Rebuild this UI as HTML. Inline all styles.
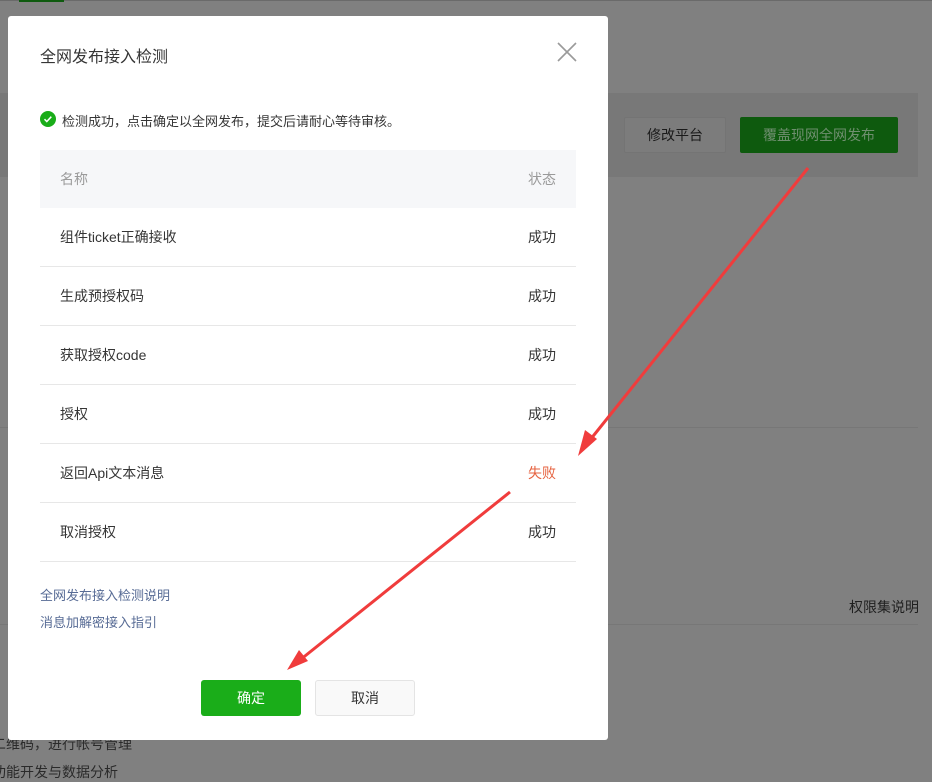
<!DOCTYPE html>
<html><head><meta charset="utf-8"><style>
*{margin:0;padding:0;box-sizing:border-box}
body{width:932px;height:773px;overflow:hidden;background:#808080;position:relative;font-family:"Liberation Sans","Noto Sans CJK SC",sans-serif;font-size:14px;color:#353535}
.a{position:absolute}
.row{position:absolute;left:40px;width:536px;height:59px;border-bottom:1px solid #e7e7e7;line-height:58px;padding:0 20px}
.row span{float:right}
</style></head><body>
<div class="a" style="left:0;top:0;width:932px;height:1px;background:#6a6a6a"></div>
<div class="a" style="left:19px;top:0;width:45px;height:2px;background:#0e5a0e"></div>
<div class="a" style="left:0;top:93px;width:918px;height:84px;background:#787878"></div>
<div class="a" style="left:624px;top:117px;width:102px;height:36px;background:#7c7c7c;border:1px solid #747474;border-radius:2px;line-height:34px;text-align:center;color:#1a1a1a">修改平台</div>
<div class="a" style="left:740px;top:117px;width:158px;height:36px;background:#0e5a0e;border-radius:2px;line-height:36px;text-align:center;color:#6f8f6f">覆盖现网全网发布</div>
<div class="a" style="left:0;top:427px;width:918px;height:1px;background:#777"></div>
<div class="a" style="left:0;top:624px;width:918px;height:1px;background:#777"></div>
<div class="a" style="left:849px;top:597px;color:#1f1f1f">权限集说明</div>
<div class="a" style="left:-8px;top:734px;color:#2a2a2a">二维码，进行帐号管理</div>
<div class="a" style="left:-8px;top:762px;color:#2a2a2a">功能开发与数据分析</div>
<div class="a" style="left:8px;top:16px;width:600px;height:724px;background:#fff;border-radius:3px"></div>
<div class="a" style="left:40px;top:43px;font-size:16px;color:#353535">全网发布接入检测</div>
<svg class="a" style="left:557px;top:42px" width="20" height="20"><path d="M1 1L19 19M19 1L1 19" stroke="#9a9a9a" stroke-width="1.6"/></svg>
<svg class="a" style="left:40px;top:111px" width="16" height="16"><circle cx="8" cy="8" r="8" fill="#1aad19"/><path d="M4.5 8.2l2.3 2.3 4.5-4.8" stroke="#fff" stroke-width="1.5" fill="none"/></svg>
<div class="a" style="left:62px;top:111px;font-size:13px;color:#353535">检测成功，点击确定以全网发布，提交后请耐心等待审核。</div>
<div class="a" style="left:40px;top:150px;width:536px;height:58px;background:#f6f7f9;line-height:58px;padding:0 20px;color:#9a9a9a">名称<span style="float:right">状态</span></div>
<div class="row" style="top:208px">组件ticket正确接收<span>成功</span></div>
<div class="row" style="top:267px">生成预授权码<span>成功</span></div>
<div class="row" style="top:326px">获取授权code<span>成功</span></div>
<div class="row" style="top:385px">授权<span>成功</span></div>
<div class="row" style="top:444px">返回Api文本消息<span style="color:#e6623f">失败</span></div>
<div class="row" style="top:503px">取消授权<span>成功</span></div>
<div class="a" style="left:40px;top:585px;font-size:13px;color:#576b95">全网发布接入检测说明</div>
<div class="a" style="left:40px;top:612px;font-size:13px;color:#576b95">消息加解密接入指引</div>
<div class="a" style="left:201px;top:680px;width:100px;height:36px;background:#1aad19;border-radius:3px;color:#fff;line-height:36px;text-align:center">确定</div>
<div class="a" style="left:315px;top:680px;width:100px;height:36px;background:#f9f9f9;border:1px solid #e4e4e4;border-radius:3px;color:#353535;line-height:34px;text-align:center">取消</div>
<svg class="a" style="left:0;top:0" width="932" height="773">
<path d="M808 168L590 440" stroke="#f03c3c" stroke-width="3"/>
<path d="M578 456L585 430L597 439Z" fill="#f03c3c"/>
<path d="M510 492L300 660" stroke="#f03c3c" stroke-width="3"/>
<path d="M287 670L299 650L308 661Z" fill="#f03c3c"/>
</svg>
</body></html>
